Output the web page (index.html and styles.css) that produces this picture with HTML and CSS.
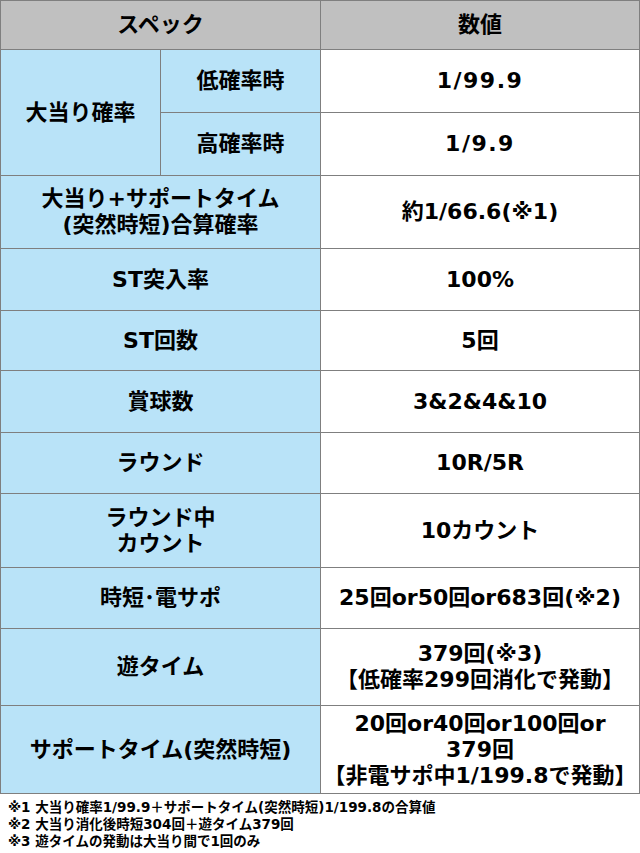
FILE: index.html
```html
<!DOCTYPE html>
<html lang="ja">
<head>
<meta charset="utf-8">
<link rel="stylesheet" href="styles.css">
</head>
<body>
<div class="spec">
  <div class="cell hd span2">スペック</div>
  <div class="cell hd">数値</div>

  <div class="cell lb rs2">大当り確率</div>
  <div class="cell lb">低確率時</div>
  <div class="cell val big">1/99.9</div>
  <div class="cell lb">高確率時</div>
  <div class="cell val big">1/9.9</div>

  <div class="cell lb span2">大当り+サポートタイム<br>(突然時短)合算確率</div>
  <div class="cell val">約1/66.6(※1)</div>

  <div class="cell lb span2">ST突入率</div>
  <div class="cell val">100%</div>

  <div class="cell lb span2">ST回数</div>
  <div class="cell val">5回</div>

  <div class="cell lb span2">賞球数</div>
  <div class="cell val">3&amp;2&amp;4&amp;10</div>

  <div class="cell lb span2">ラウンド</div>
  <div class="cell val">10R/5R</div>

  <div class="cell lb span2">ラウンド中<br>カウント</div>
  <div class="cell val">10カウント</div>

  <div class="cell lb span2">時短･電サポ</div>
  <div class="cell val">25回or50回or683回(※2)</div>

  <div class="cell lb span2">遊タイム</div>
  <div class="cell val">379回(※3)<br>【低確率299回消化で発動】</div>

  <div class="cell lb span2">サポートタイム(突然時短)</div>
  <div class="cell val">20回or40回or100回or<br>379回<br>【非電サポ中1/199.8で発動】</div>
</div>
<div class="notes">
  <p>※1 大当り確率1/99.9＋サポートタイム(突然時短)1/199.8の合算値</p>
  <p>※2 大当り消化後時短304回＋遊タイム379回</p>
  <p>※3 遊タイムの発動は大当り間で1回のみ</p>
</div>
</body>
</html>
```

FILE: styles.css
```css
html, body {
  margin: 0;
  padding: 0;
  background: #ffffff;
}

body {
  width: 640px;
  font-family: "DejaVu Sans", "Noto Sans CJK JP", sans-serif;
  font-weight: bold;
  color: #000;
}

.spec {
  display: grid;
  grid-template-columns: 159px 159px 318px;
  grid-template-rows: 48px 62px 62px 72px 61px 59px 61px 60px 73px 60px 76px 87px;
  gap: 1px;
  padding: 1px;
  background: #7f7f7f;
}

.cell {
  display: flex;
  align-items: center;
  justify-content: center;
  text-align: center;
  font-size: 22px;
  line-height: 26px;
}

.hd {
  background: #c0c0c0;
}

.lb {
  background: #b9e3f8;
}

.val {
  background: #ffffff;
}

.big {
  letter-spacing: 1.5px;
}

.span2 {
  grid-column: span 2;
}

.rs2 {
  grid-row: span 2;
}

.notes {
  padding: 5px 0 0 8px;
}

.notes p {
  margin: 0;
  font-size: 13.5px;
  line-height: 17px;
}
```
